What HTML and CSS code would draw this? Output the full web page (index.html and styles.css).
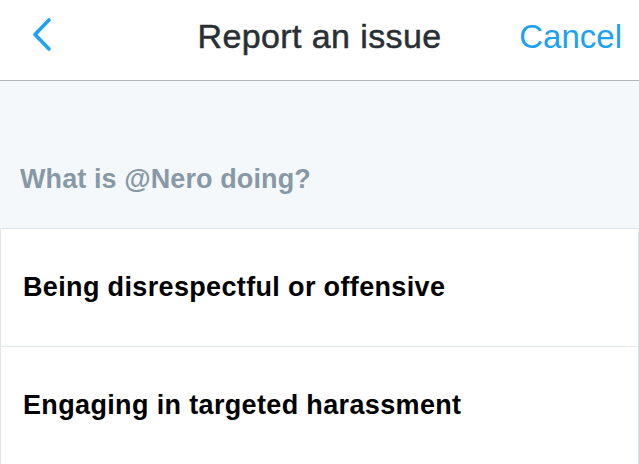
FILE: index.html
```html
<!DOCTYPE html>
<html>
<head>
<meta charset="utf-8">
<link rel="stylesheet" href="styles.css">
</head>
<body>
<div class="app">
  <header class="nav">
    <div class="nav-left">
      <svg class="back" width="24" height="40" viewBox="0 0 24 40">
        <path d="M17 4 L3 18.5 L17 33" fill="none" stroke="#1da1f2" stroke-width="3.6" stroke-linecap="round" stroke-linejoin="round"/>
      </svg>
    </div>
    <h1 class="title">Report an issue</h1>
    <div class="nav-right"><span class="cancel">Cancel</span></div>
  </header>
  <section class="prompt">
    <h2 class="question">What is @Nero doing?</h2>
  </section>
  <ul class="options">
    <li class="option">Being disrespectful or offensive</li>
    <li class="option">Engaging in targeted harassment</li>
  </ul>
</div>
</body>
</html>
```
FILE: styles.css
```css
html, body {
  margin: 0;
  padding: 0;
  background: #ffffff;
}
body {
  font-family: "Liberation Sans", Helvetica, Arial, sans-serif;
  width: 639px;
  height: 464px;
  overflow: hidden;
}
.app {
  display: flex;
  flex-direction: column;
}
.nav {
  display: grid;
  grid-template-columns: 1fr auto 1fr;
  align-items: center;
  height: 72px;
  padding-bottom: 8px;
  border-bottom: 1px solid #aeb6bc;
  background: #ffffff;
}
.nav-left {
  display: flex;
  align-items: center;
  padding-left: 32px;
}
.back {
  display: block;
}
.title {
  margin: 0;
  font-size: 34px;
  font-weight: normal;
  color: #292f33;
  line-height: 1;
  letter-spacing: 0.4px;
  -webkit-text-stroke: 0.5px #292f33;
}
.nav-right {
  display: flex;
  justify-content: flex-end;
  padding-right: 17px;
}
.cancel {
  font-size: 33px;
  color: #1da1f2;
  line-height: 1;
}
.prompt {
  background: #f5f8fa;
  height: 147px;
  display: flex;
  align-items: flex-end;
  padding-left: 20px;
  border-bottom: 1px solid #e1e8ed;
}
.question {
  margin: 0 0 35px 0;
  font-size: 27px;
  font-weight: bold;
  color: #8899a6;
  line-height: 1;
  letter-spacing: 0.1px;
}
.options {
  list-style: none;
  margin: 0;
  padding: 0;
}
.option {
  height: 117px;
  display: flex;
  align-items: center;
  padding-left: 22px;
  border-left: 1px solid #e1e8ed;
  border-right: 1px solid #e1e8ed;
  border-bottom: 1px solid #e1e8ed;
  font-size: 27px;
  font-weight: bold;
  color: #000000;
  letter-spacing: 0.35px;
}
```
